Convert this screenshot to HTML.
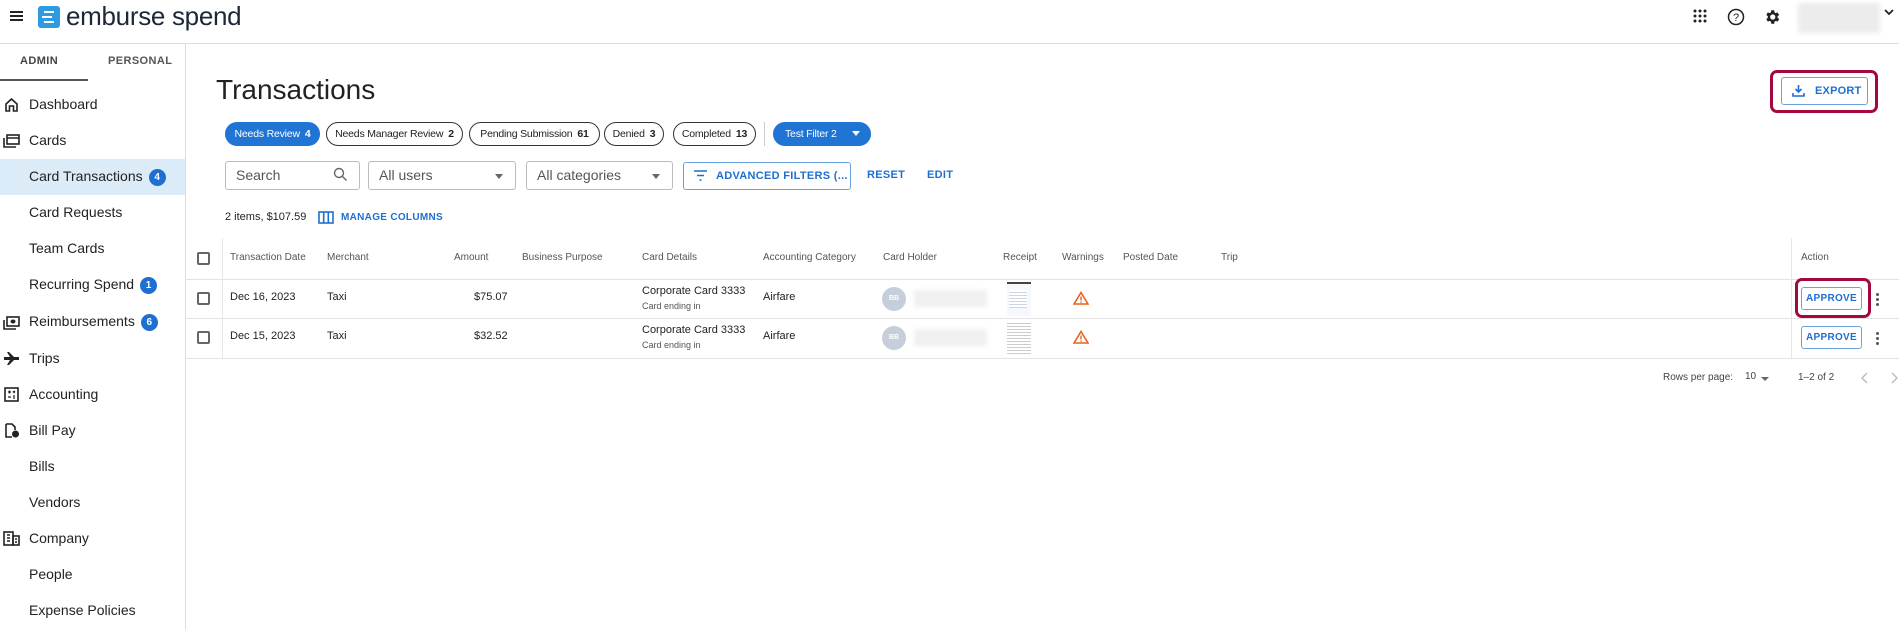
<!DOCTYPE html>
<html><head><meta charset="utf-8"><style>
*{box-sizing:border-box;margin:0;padding:0}
body{width:1899px;height:630px;overflow:hidden;background:#fff;font-family:"Liberation Sans","DejaVu Sans",sans-serif;color:#222;position:relative}
.a{position:absolute;white-space:nowrap}
.nav{font-size:14px;color:#222;left:29px}
.ico{position:absolute;left:3px;width:17px;height:15px}
.badge{display:inline-block;width:17px;height:17px;border-radius:50%;background:#1f6fd0;color:#fff;font-size:10px;font-weight:bold;text-align:center;line-height:17px;margin-left:6px;vertical-align:1px}
.chip{position:absolute;top:122px;height:24px;border:1px solid #333;border-radius:12px;font-size:10.5px;line-height:22px;padding:0;text-align:center;white-space:nowrap;color:#222;letter-spacing:-.2px}
.chip b{margin-left:5px}
.chip.on{background:#1f74d4;border-color:#1f74d4;color:#fff}
.inp{position:absolute;top:161px;height:29px;border:1px solid #bbb;border-radius:3px;font-size:14px;color:#555;line-height:27px;padding-left:10px}
.caret{position:absolute;right:12px;top:12px;border-left:4px solid transparent;border-right:4px solid transparent;border-top:5px solid #666}
.blue{color:#1f6fd0;font-weight:bold;font-size:11px;letter-spacing:.3px}
.th{top:252px;font-size:10px;color:#555}
.td{font-size:11px;color:#222}
.hl{position:absolute;left:185px;right:0;height:1px;background:#e3e3e3}
.cb{position:absolute;left:197px;width:13px;height:13px;border:2px solid #666;border-radius:2px}
.btn{position:absolute;left:1801px;width:61px;height:23px;border:1px solid #6aa3e3;border-radius:3px;color:#1f6fd0;font-size:10px;font-weight:bold;text-align:center;line-height:21px;letter-spacing:.3px}
.red{position:absolute;border:3px solid #a5083f;border-radius:7px}
.kebab{position:absolute;left:1876px;width:3px}
.kebab i{display:block;width:3px;height:3px;background:#555;border-radius:50%;margin-bottom:2px}
</style></head><body>

<!-- top bar -->
<div class="a" style="left:10px;top:11px;width:13px;height:2px;background:#222;box-shadow:0 4px #222,0 8px #222"></div>
<div class="a" style="left:38px;top:6px;width:22px;height:22px;background:#2d9be0;border-radius:3px"></div>
<div class="a" style="left:44px;top:11px;width:10px;height:2px;background:#fff;box-shadow:-2px 5px #fff,0 10px #fff"></div>
<div class="a" style="left:66px;top:0px;font-size:26px;color:#1c2838;letter-spacing:-.3px;line-height:32px">emburse spend</div>
<svg class="a" style="left:1693px;top:9px" width="14" height="14"><g fill="#222"><circle cx="2" cy="2" r="1.5"/><circle cx="7" cy="2" r="1.5"/><circle cx="12" cy="2" r="1.5"/><circle cx="2" cy="7" r="1.5"/><circle cx="7" cy="7" r="1.5"/><circle cx="12" cy="7" r="1.5"/><circle cx="2" cy="12" r="1.5"/><circle cx="7" cy="12" r="1.5"/><circle cx="12" cy="12" r="1.5"/></g></svg>
<svg class="a" style="left:1727px;top:8px" width="18" height="18"><circle cx="9" cy="9" r="7.5" fill="none" stroke="#222" stroke-width="1.5"/><text x="9" y="13" font-size="11" text-anchor="middle" fill="#222" font-family="Liberation Sans">?</text></svg>
<svg class="a" style="left:1763px;top:8px" width="18" height="18" viewBox="0 0 24 24"><path fill="#222" d="M19.4 13a7.5 7.5 0 0 0 0-2l2.1-1.6-2-3.5-2.5 1a7.6 7.6 0 0 0-1.7-1L15 3h-4l-.4 2.9a7.6 7.6 0 0 0-1.7 1l-2.5-1-2 3.5L6.5 11a7.5 7.5 0 0 0 0 2l-2.1 1.6 2 3.5 2.5-1a7.6 7.6 0 0 0 1.7 1L11 21h4l.4-2.9a7.6 7.6 0 0 0 1.7-1l2.5 1 2-3.5zM13 15.5a3.5 3.5 0 1 1 0-7 3.5 3.5 0 0 1 0 7z"/></svg>
<div class="a" style="left:1798px;top:3px;width:82px;height:30px;background:#ececec;filter:blur(2px)"></div>
<svg class="a" style="left:1884px;top:9px" width="10" height="7"><path d="M1 1l4 4 4-4" fill="none" stroke="#222" stroke-width="1.8"/></svg>
<div class="a" style="left:0;top:43px;width:1899px;height:1px;background:#ddd"></div>

<!-- sidebar -->
<div class="a" style="left:185px;top:44px;width:1px;height:586px;background:#ddd"></div>
<div class="a" style="left:20px;top:55px;font-size:11px;font-weight:bold;color:#444;letter-spacing:.4px">ADMIN</div>
<div class="a" style="left:108px;top:55px;font-size:11px;font-weight:bold;color:#555;letter-spacing:.4px">PERSONAL</div>
<div class="a" style="left:0;top:79px;width:88px;height:2px;background:#555"></div>
<div class="a" style="left:0;top:159px;width:185px;height:36px;background:#dcebf8"></div>

<svg class="ico" style="top:97px" viewBox="0 0 17 15"><path d="M3 14V7L8.5 2 14 7v7h-3.5V9h-4v5z" fill="none" stroke="#222" stroke-width="1.6"/></svg>
<div class="a nav" style="top:96px">Dashboard</div>
<svg class="ico" style="top:133px" viewBox="0 0 17 15"><rect x="4" y="2" width="12" height="9" fill="none" stroke="#222" stroke-width="1.6"/><path d="M1 5v9h12M4 5h12" fill="none" stroke="#222" stroke-width="1.6"/></svg>
<div class="a nav" style="top:132px">Cards</div>
<div class="a nav" style="top:168px">Card Transactions<span class="badge">4</span></div>
<div class="a nav" style="top:204px">Card Requests</div>
<div class="a nav" style="top:240px">Team Cards</div>
<div class="a nav" style="top:276px">Recurring Spend<span class="badge">1</span></div>
<svg class="ico" style="top:315px" viewBox="0 0 17 15"><rect x="4" y="2" width="12" height="9" fill="none" stroke="#222" stroke-width="1.6"/><ellipse cx="10" cy="6.5" rx="2.5" ry="2" fill="#222"/><path d="M1 5v9h12" fill="none" stroke="#222" stroke-width="1.6"/></svg>
<div class="a nav" style="top:313px">Reimbursements<span class="badge">6</span></div>
<svg class="ico" style="top:351px" viewBox="0 0 17 15"><path d="M1 6h6L4 1h2l5 5h5v3h-5l-5 5H4l3-5H1z" fill="#222"/></svg>
<div class="a nav" style="top:350px">Trips</div>
<svg class="ico" style="top:387px" viewBox="0 0 17 15"><rect x="2" y="1" width="13" height="13" fill="none" stroke="#222" stroke-width="1.6"/><path d="M5 5h3M6.5 3.5v3M10 4l2 2M12 4l-2 2M5 10h3M10 9h2M10 11h2" stroke="#222" stroke-width="1.2"/></svg>
<div class="a nav" style="top:386px">Accounting</div>
<svg class="ico" style="top:423px" viewBox="0 0 17 15"><path d="M3 1h6l3 3v3M3 1v13h6" fill="none" stroke="#222" stroke-width="1.6"/><circle cx="12.5" cy="11" r="3.5" fill="#222"/></svg>
<div class="a nav" style="top:422px">Bill Pay</div>
<div class="a nav" style="top:458px">Bills</div>
<div class="a nav" style="top:494px">Vendors</div>
<svg class="ico" style="top:531px" viewBox="0 0 17 15"><rect x="1" y="1" width="9" height="13" fill="none" stroke="#222" stroke-width="1.6"/><rect x="10" y="5" width="6" height="9" fill="none" stroke="#222" stroke-width="1.6"/><path d="M4 4h3M4 7h3M4 10h3M12 8h2M12 11h2" stroke="#222" stroke-width="1.4"/></svg>
<div class="a nav" style="top:530px">Company</div>
<div class="a nav" style="top:566px">People</div>
<div class="a nav" style="top:602px">Expense Policies</div>

<!-- main -->
<div class="a" style="left:216px;top:74px;font-size:28px;color:#222">Transactions</div>

<div class="red" style="left:1770px;top:70px;width:108px;height:43px"></div>
<div class="a" style="left:1781px;top:77px;width:87px;height:28px;border:1px solid #6aa3e3;border-radius:3px;color:#1f6fd0;font-size:11px;font-weight:bold;line-height:26px;padding-left:33px;letter-spacing:.2px">EXPORT</div>
<svg class="a" style="left:1792px;top:84px" width="13" height="13"><path d="M6.5 1v7M3.5 5l3 3 3-3M1 9v3h11V9" fill="none" stroke="#1f6fd0" stroke-width="1.6"/></svg>

<div class="chip on" style="left:225px;width:95px">Needs Review<b>4</b></div>
<div class="chip" style="left:326px;width:137px">Needs Manager Review<b>2</b></div>
<div class="chip" style="left:469px;width:131px">Pending Submission<b>61</b></div>
<div class="chip" style="left:604px;width:60px">Denied<b>3</b></div>
<div class="chip" style="left:673px;width:83px">Completed<b>13</b></div>
<div class="a" style="left:764px;top:122px;width:1px;height:24px;background:#ccc"></div>
<div class="chip on" style="left:773px;width:98px;text-align:left;padding-left:11px">Test Filter 2</div>
<div class="a" style="left:852px;top:131px;border-left:4px solid transparent;border-right:4px solid transparent;border-top:5px solid #fff"></div>

<div class="inp" style="left:225px;width:135px">Search</div>
<svg class="a" style="left:333px;top:167px" width="15" height="15"><circle cx="6" cy="6" r="4.5" fill="none" stroke="#666" stroke-width="1.4"/><path d="M9.5 9.5l4 4" stroke="#666" stroke-width="1.4"/></svg>
<div class="inp" style="left:368px;width:148px">All users<span class="caret"></span></div>
<div class="inp" style="left:526px;width:147px">All categories<span class="caret"></span></div>
<div class="a blue" style="left:683px;top:162px;width:168px;height:28px;border:1px solid #6aa3e3;border-radius:3px;line-height:26px;padding-left:32px">ADVANCED FILTERS  (...</div>
<svg class="a" style="left:694px;top:170px" width="13" height="11"><path d="M0 1h13M3 5.5h7M5.5 10h2" stroke="#1f6fd0" stroke-width="1.6"/></svg>
<div class="a blue" style="left:867px;top:169px">RESET</div>
<div class="a blue" style="left:927px;top:169px">EDIT</div>

<div class="a" style="left:225px;top:211px;font-size:11px">2 items, $107.59</div>
<svg class="a" style="left:318px;top:211px" width="16" height="13"><rect x="1" y="1" width="14" height="11" fill="none" stroke="#1f6fd0" stroke-width="1.6"/><path d="M5.7 1v11M10.3 1v11" stroke="#1f6fd0" stroke-width="1.6"/></svg>
<div class="a blue" style="left:341px;top:212px;font-size:10px">MANAGE COLUMNS</div>

<!-- table -->
<div class="a" style="left:222px;top:238px;width:1px;height:120px;background:#e6e6e6"></div>
<div class="a" style="left:1791px;top:238px;width:1px;height:120px;background:#e6e6e6"></div>
<div class="hl" style="top:279px"></div>
<div class="hl" style="top:318px"></div>
<div class="hl" style="top:358px"></div>
<div class="cb" style="top:252px"></div>
<div class="cb" style="top:292px"></div>
<div class="cb" style="top:331px"></div>

<div class="a th" style="left:230px">Transaction Date</div>
<div class="a th" style="left:327px">Merchant</div>
<div class="a th" style="left:454px">Amount</div>
<div class="a th" style="left:522px">Business Purpose</div>
<div class="a th" style="left:642px">Card Details</div>
<div class="a th" style="left:763px">Accounting Category</div>
<div class="a th" style="left:883px">Card Holder</div>
<div class="a th" style="left:1003px">Receipt</div>
<div class="a th" style="left:1062px">Warnings</div>
<div class="a th" style="left:1123px">Posted Date</div>
<div class="a th" style="left:1221px">Trip</div>
<div class="a th" style="left:1801px">Action</div>

<div class="a td" style="left:230px;top:291px">Dec 16, 2023</div>
<div class="a td" style="left:327px;top:291px">Taxi</div>
<div class="a td" style="left:474px;top:291px">$75.07</div>
<div class="a td" style="left:642px;top:285px">Corporate Card 3333</div>
<div class="a" style="left:642px;top:301px;font-size:9px;color:#555">Card ending in</div>
<div class="a td" style="left:763px;top:291px">Airfare</div>
<div class="a td" style="left:230px;top:330px">Dec 15, 2023</div>
<div class="a td" style="left:327px;top:330px">Taxi</div>
<div class="a td" style="left:474px;top:330px">$32.52</div>
<div class="a td" style="left:642px;top:324px">Corporate Card 3333</div>
<div class="a" style="left:642px;top:340px;font-size:9px;color:#555">Card ending in</div>
<div class="a td" style="left:763px;top:330px">Airfare</div>

<div class="a" style="left:882px;top:287px;width:24px;height:24px;border-radius:50%;background:#c5ceda;color:#fff;font-size:7px;font-weight:bold;text-align:center;line-height:24px">BB</div>
<div class="a" style="left:882px;top:326px;width:24px;height:24px;border-radius:50%;background:#c5ceda;color:#fff;font-size:7px;font-weight:bold;text-align:center;line-height:24px">BB</div>
<div class="a" style="left:914px;top:290px;width:73px;height:17px;background:#f0f0f0;filter:blur(2px)"></div>
<div class="a" style="left:914px;top:329px;width:73px;height:17px;background:#f0f0f0;filter:blur(2px)"></div>
<div class="a" style="left:1007px;top:282px;width:24px;height:34px;background:#f6f8fb;border-top:2px solid #444"></div>
<div class="a" style="left:1009px;top:290px;width:18px;height:18px;background:repeating-linear-gradient(#fff 0 2px,#c9d6e6 2px 3px)"></div>
<div class="a" style="left:1007px;top:321px;width:24px;height:34px;background:repeating-linear-gradient(#fff 0 2px,#ccc 2px 3px)"></div>
<svg class="a" style="left:1073px;top:291px" width="16" height="14"><path d="M8 1.5L15 13H1z" fill="none" stroke="#e8621c" stroke-width="1.6"/><path d="M8 5.5v4M8 10.5v1.2" stroke="#e8621c" stroke-width="1.4"/></svg>
<svg class="a" style="left:1073px;top:330px" width="16" height="14"><path d="M8 1.5L15 13H1z" fill="none" stroke="#e8621c" stroke-width="1.6"/><path d="M8 5.5v4M8 10.5v1.2" stroke="#e8621c" stroke-width="1.4"/></svg>

<div class="red" style="left:1795px;top:278px;width:76px;height:40px"></div>
<div class="btn" style="top:287px">APPROVE</div>
<div class="btn" style="top:326px">APPROVE</div>
<div class="kebab" style="top:293px"><i></i><i></i><i></i></div>
<div class="kebab" style="top:332px"><i></i><i></i><i></i></div>

<div class="a" style="left:1663px;top:372px;font-size:10px;color:#444">Rows per page:</div>
<div class="a" style="left:1745px;top:371px;font-size:10px;color:#444">10</div>
<div class="a" style="left:1761px;top:377px;border-left:4px solid transparent;border-right:4px solid transparent;border-top:4px solid #666"></div>
<div class="a" style="left:1798px;top:372px;font-size:10px;color:#444">1–2 of 2</div>
<svg class="a" style="left:1861px;top:372px" width="8" height="12"><path d="M6 1L1 6l5 5" fill="none" stroke="#bbb" stroke-width="1.4"/></svg>
<svg class="a" style="left:1890px;top:372px" width="8" height="12"><path d="M2 1l5 5-5 5" fill="none" stroke="#bbb" stroke-width="1.4"/></svg>
</body></html>
